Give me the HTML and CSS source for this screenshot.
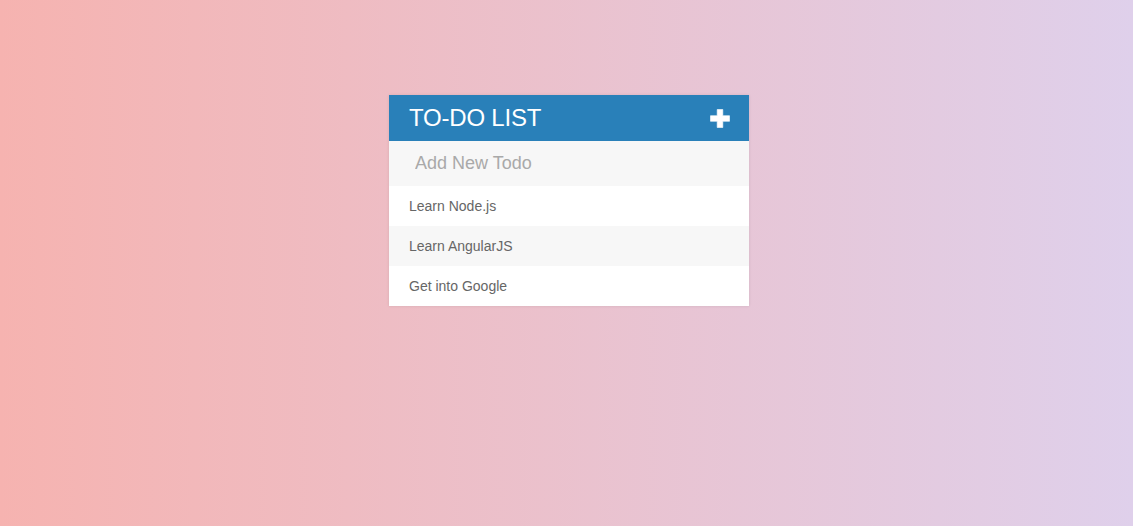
FILE: index.html
```html
<!DOCTYPE html>
<html>
<head>
<meta charset="utf-8">
<link rel="stylesheet" href="styles.css">
</head>
<body>
<div class="page">
  <div class="card">
    <div class="card-header">
      <h1 class="title">TO-DO LIST</h1>
      <svg class="plus" width="20" height="19" viewBox="0 0 20 19"><path d="M7.2 0.5h5.6v6.2h6.7v5.6h-6.7v6.2h-5.6v-6.2h-6.7v-5.6h6.7z" fill="#fff" stroke="#fff" stroke-width="0.6" stroke-linejoin="round"/></svg>
    </div>
    <input class="new-todo" type="text" placeholder="Add New Todo">
    <ul class="todo-list">
      <li class="todo-item">Learn Node.js</li>
      <li class="todo-item">Learn AngularJS</li>
      <li class="todo-item">Get into Google</li>
    </ul>
  </div>
</div>
</body>
</html>
```

FILE: styles.css
```css
html, body {
  margin: 0;
  padding: 0;
  height: 100%;
}
body {
  font-family: "Liberation Sans", Arial, sans-serif;
  background: linear-gradient(to right, #f6b3b0, #dfd0eb);
}
.page {
  display: flex;
  justify-content: center;
  padding-top: 95px;
}
.card {
  width: 360px;
  background: #fff;
  box-shadow: 0 0 3px rgba(0, 0, 0, 0.1);
  margin-left: 5px;
}
.card-header {
  height: 46px;
  background: #2980b9;
  display: flex;
  align-items: center;
  justify-content: space-between;
  padding: 0 20px;
  box-sizing: border-box;
}
.title {
  margin: 0;
  font-weight: normal;
  font-size: 24px;
  color: #fff;
  line-height: 46px;
  letter-spacing: -0.2px;
}
.plus {
  display: block;
  margin-right: -1px;
}
.new-todo {
  display: block;
  width: 100%;
  box-sizing: border-box;
  height: 45px;
  border: 0;
  outline: none;
  background: #f7f7f7;
  padding: 0 0 0 26px;
  font-family: "Liberation Sans", Arial, sans-serif;
  font-size: 18px;
  color: #666;
}
.new-todo::placeholder {
  color: #a9a9a9;
}
.todo-list {
  list-style: none;
  margin: 0;
  padding: 0;
}
.todo-item {
  height: 40px;
  line-height: 40px;
  padding-left: 20px;
  font-size: 14px;
  color: #666;
  background: #fff;
}
.todo-item:nth-child(even) {
  background: #f7f7f7;
}
```
